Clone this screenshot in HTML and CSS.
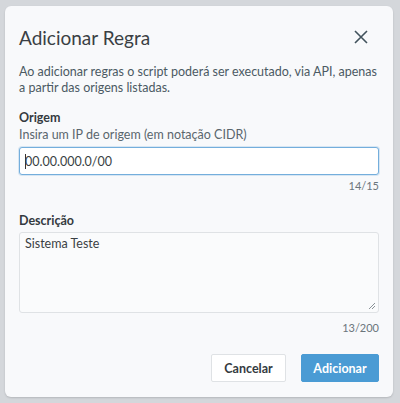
FILE: index.html
```html
<!DOCTYPE html>
<html lang="pt">
<head>
<meta charset="utf-8">
<link rel="stylesheet" href="styles.css">
</head>
<body>
<div class="modal">
  <div class="header">
    <h1 class="title">Adicionar Regra</h1>
    <button class="close" aria-label="Fechar">
      <svg width="14" height="14" viewBox="0 0 14 14"><path d="M1 1L13 13M13 1L1 13" stroke="#41525c" stroke-width="1.6" fill="none"/></svg>
    </button>
  </div>
  <p class="intro">Ao adicionar regras o script poderá ser executado, via API, apenas a partir das origens listadas.</p>
  <div class="field">
    <label class="label">Origem</label>
    <div class="hint">Insira um IP de origem (em notação CIDR)</div>
    <div class="input"><span class="caret"></span>00.00.000.0/00</div>
    <div class="count">14/15</div>
  </div>
  <div class="field desc">
    <label class="label">Descrição</label>
    <div class="textarea">Sistema Teste
      <svg class="grip" width="8" height="8" viewBox="0 0 8 8"><path d="M1 7L7 1M4 7L7 4" stroke="#8a9297" stroke-width="1"/></svg>
    </div>
    <div class="count count-desc">13/200</div>
  </div>
  <div class="actions">
    <button class="btn secondary">Cancelar</button>
    <button class="btn primary">Adicionar</button>
  </div>
</div>
</body>
</html>
```
FILE: styles.css
```css
html, body { margin: 0; padding: 0; }
body {
  background: #d4d7db;
  font-family: Lato, "Noto Sans", sans-serif;
  width: 400px;
  height: 403px;
  overflow: hidden;
}
.modal {
  margin: 6px 7px 0 5px;
  height: 391px;
  box-sizing: border-box;
  background: #f8f9fb;
  border-radius: 6px;
  box-shadow: 0 1px 2px rgba(0,0,0,0.15);
  padding: 0 14px;
}
.header {
  display: flex;
  align-items: center;
  justify-content: space-between;
  height: 54px;
  padding-top: 4px;
}
.title {
  margin: 0;
  font-size: 19px;
  font-weight: 400;
  color: #3a3f44;
}
.close {
  background: none;
  border: 0;
  padding: 0;
  margin-right: 11px;
  display: flex;
}
.intro {
  margin: 0;
  font-size: 12.5px;
  line-height: 16px;
  color: #4b5a63;
}
.field { margin-top: 14px; }
.label {
  display: block;
  font-size: 12.5px;
  font-weight: 700;
  color: #343a40;
  line-height: 16px;
}
.hint {
  font-size: 12.5px;
  color: #5a666d;
  line-height: 16px;
  margin-top: 1px;
}
.input {
  margin-top: 4px;
  height: 28px;
  box-sizing: border-box;
  border: 1px solid #74aedc;
  border-radius: 3px;
  background: #fff;
  box-shadow: 0 0 0 1px rgba(116,174,220,0.25);
  font-size: 12.5px;
  color: #3a3f44;
  display: flex;
  align-items: center;
  padding-left: 5px;
}
.caret {
  width: 1px;
  height: 15px;
  background: #333;
  margin-right: -1px;
}
.count {
  text-align: right;
  font-size: 11px;
  color: #6b757b;
  margin-top: 4px;
  line-height: 14px;
}
.count-desc { margin-top: 8px; }
.desc { margin-top: 20px; }
.textarea {
  position: relative;
  margin-top: 3px;
  height: 81px;
  box-sizing: border-box;
  border: 1px solid #dfe2e5;
  border-radius: 3px;
  background: #fafbfc;
  font-size: 12.5px;
  color: #3a3f44;
  padding: 3px 5px;
  line-height: 16px;
}
.grip { position: absolute; right: 2px; bottom: 2px; }
.actions {
  display: flex;
  justify-content: flex-end;
  gap: 15px;
  margin-top: 19px;
}
.btn {
  font-family: Lato, sans-serif;
  font-size: 12.5px;
  font-weight: 700;
  height: 28px;
  border-radius: 2px;
  padding: 0;
}
.secondary {
  background: #fff;
  border: 1px solid #dfe2e5;
  color: #343a40;
  width: 75px;
}
.primary {
  background: #4a9bd4;
  border: 1px solid #4a9bd4;
  color: #fff;
  width: 78px;
}
```
